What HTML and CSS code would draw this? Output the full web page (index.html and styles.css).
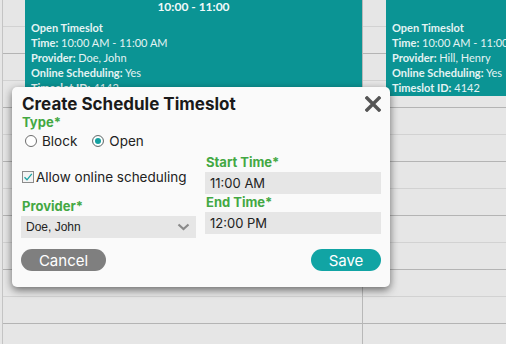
FILE: index.html
```html
<!DOCTYPE html>
<html lang="en">
<head>
    <meta charset="UTF-8">
    <meta name="viewport" content="width=device-width, initial-scale=1.0">
    <title>Schedule</title>
    <link rel="stylesheet" href="styles.css">
</head>
<body>
    <div class="calendar">
        <div class="gutter">
            <div class="slot"></div><div class="slot hour"></div><div class="slot"></div><div class="slot hour"></div>
            <div class="slot"></div><div class="slot hour"></div><div class="slot"></div><div class="slot hour"></div>
            <div class="slot"></div><div class="slot hour"></div><div class="slot"></div><div class="slot hour"></div>
            <div class="slot"></div>
        </div>
        <div class="day first">
            <div class="slot"></div><div class="slot hour"></div><div class="slot"></div><div class="slot hour"></div>
            <div class="slot"></div><div class="slot hour"></div><div class="slot"></div><div class="slot hour"></div>
            <div class="slot"></div><div class="slot hour"></div><div class="slot"></div><div class="slot hour"></div>
            <div class="slot"></div>
            <div class="event event-one">
                <div class="event-head">10:00 - 11:00</div>
                <p><b>Open Timeslot</b></p>
                <p><b>Time:</b> 10:00 AM - 11:00 AM</p>
                <p><b>Provider:</b> Doe, John</p>
                <p><b>Online Scheduling:</b> Yes</p>
                <p><b>Timeslot ID:</b> 4142</p>
            </div>
        </div>
        <div class="day second">
            <div class="slot"></div><div class="slot hour"></div><div class="slot"></div><div class="slot hour"></div>
            <div class="slot"></div><div class="slot hour"></div><div class="slot"></div><div class="slot hour"></div>
            <div class="slot"></div><div class="slot hour"></div><div class="slot"></div><div class="slot hour"></div>
            <div class="slot"></div>
            <div class="event event-two">
                <p><b>Open Timeslot</b></p>
                <p><b>Time:</b> 10:00 AM - 11:00 AM</p>
                <p><b>Provider:</b> Hill, Henry</p>
                <p><b>Online Scheduling:</b> Yes</p>
                <p><b>Timeslot ID:</b> 4142</p>
            </div>
        </div>
    </div>

    <div class="modal">
        <div class="modal-title">
            <h2>Create Schedule Timeslot</h2>
            <span class="close">
                <svg width="16" height="16" viewBox="0 0 16 16"><path d="M2 2 L14 14 M14 2 L2 14" stroke="#555" stroke-width="3.4" stroke-linecap="square"/></svg>
            </span>
        </div>
        <div class="field-label">Type*</div>
        <div class="radios">
            <label class="radio-item"><span class="radio"></span>Block</label>
            <label class="radio-item"><span class="radio checked"></span>Open</label>
        </div>
        <div class="form-grid">
            <label class="check-item">
                <span class="checkbox">
                    <svg width="10" height="10" viewBox="0 0 10 10"><path d="M1.5 5.2 L4 7.8 L8.8 1.8" fill="none" stroke="#1aa3a3" stroke-width="1.3"/></svg>
                </span>
                Allow online scheduling
            </label>
            <div class="field">
                <div class="field-label">Start Time*</div>
                <div class="input">11:00 AM</div>
            </div>
            <div class="field provider">
                <div class="field-label">Provider*</div>
                <div class="select">
                    <span>Doe, John</span>
                    <svg width="13" height="8" viewBox="0 0 13 8"><path d="M1.5 1.5 L6.5 6 L11.5 1.5" fill="none" stroke="#8a8a8a" stroke-width="2.2"/></svg>
                </div>
            </div>
            <div class="field end-time">
                <div class="field-label">End Time*</div>
                <div class="input">12:00 PM</div>
            </div>
        </div>
        <div class="buttons">
            <button class="btn cancel">Cancel</button>
            <button class="btn save">Save</button>
        </div>
    </div>
</body>
</html>
```

FILE: styles.css
```css
* {
    margin: 0;
    padding: 0;
    box-sizing: border-box;
}

html, body {
    height: 100%;
}

body {
    background-color: #e6e6e6;
    overflow: hidden;
    position: relative;
    font-family: "Inter", sans-serif;
}

/* calendar behind the dialog */

.calendar {
    display: flex;
    height: 100%;
}

.slot {
    height: 27px;
    border-bottom: 1px solid #d2d2d2;
}

.slot.hour {
    border-bottom-color: #b4b4b4;
}

.gutter {
    width: 23px;
    margin-left: 2px;
    border-left: 1px solid #c4c4c4;
}

.day {
    position: relative;
}

.day.first {
    width: 337px;
}

.day.second {
    flex-grow: 1;
    border-left: 1px solid #b8b8b8;
}

.event {
    position: absolute;
    top: 0;
    height: 96px;
    background-color: #0b9494;
    color: #e4f3f3;
    font-family: "Lato", sans-serif;
    font-size: 11px;
    line-height: 15px;
    padding: 0 6px;
    white-space: nowrap;
    overflow: hidden;
}

.event p {
    line-height: 15px;
}

.event-one {
    left: 0;
    width: 337px;
}

.event-two {
    left: 23px;
    right: 0;
    padding-top: 20px;
}

.event-head {
    text-align: center;
    font-weight: bold;
    font-size: 12px;
    line-height: 14px;
    height: 20px;
    color: #f2fafa;
}

/* dialog */

.modal {
    position: absolute;
    left: 12px;
    top: 87px;
    width: 378px;
    height: 200px;
    background-color: #fafafa;
    border-radius: 5px;
    box-shadow: 0 3px 8px rgba(0, 0, 0, 0.55);
    padding: 6px 9px 0 10px;
    color: #222;
}

.modal-title {
    display: flex;
    justify-content: space-between;
    align-items: center;
}

.modal-title h2 {
    font-size: 17px;
    font-weight: bold;
    color: #1a1a1a;
    line-height: 22px;
}

.close {
    display: flex;
}

.field-label {
    color: #43a843;
    font-weight: bold;
    font-size: 13px;
    line-height: 15px;
}

.radios {
    display: flex;
    gap: 15px;
    padding-left: 3px;
    margin-top: 3px;
}

.radio-item,
.check-item {
    display: flex;
    align-items: center;
    gap: 5px;
    font-size: 13.5px;
    line-height: 16px;
}

.radio {
    width: 12px;
    height: 12px;
    border: 1px solid #6d6d6d;
    border-radius: 50%;
    background-color: #fff;
}

.radio.checked {
    box-shadow: inset 0 0 0 2px #fff, inset 0 0 0 5px #12a0a0;
}

.form-grid {
    display: grid;
    grid-template-columns: 175px 176px;
    column-gap: 9px;
    margin-top: 6px;
    margin-left: -1px;
}

.check-item {
    align-self: end;
    gap: 2px;
    margin-bottom: 9px;
    padding-left: 1px;
}

.checkbox {
    width: 12px;
    height: 12px;
    border: 1px solid #8c8c8c;
    background-color: #f4f4f4;
    display: flex;
    align-items: center;
    justify-content: center;
}

.field .field-label {
    padding-left: 1px;
    margin-bottom: 2px;
}

.provider {
    margin-top: 5px;
}

.end-time {
    margin-top: 1px;
}

.input,
.select {
    background-color: #e6e6e6;
    height: 22px;
    line-height: 22px;
    font-size: 13px;
    padding-left: 5px;
}

.select {
    display: flex;
    justify-content: space-between;
    align-items: center;
    padding-right: 6px;
    font-family: "Liberation Sans", sans-serif;
    font-size: 12px;
}

.buttons {
    display: flex;
    justify-content: space-between;
    margin-top: 11px;
    margin-left: -1px;
}

.btn {
    border: none;
    border-radius: 11px;
    height: 22px;
    color: #fff;
    font-family: "Inter", sans-serif;
    font-size: 15px;
}

.cancel {
    width: 85px;
    background-color: #7f7f7f;
}

.save {
    width: 70px;
    background-color: #11a4a4;
}
```
